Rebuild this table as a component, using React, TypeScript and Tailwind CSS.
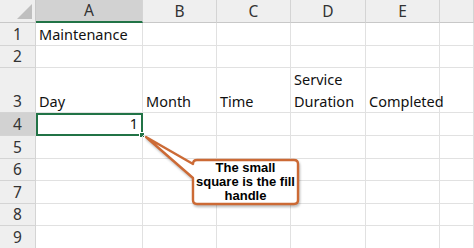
import React from "react";

const COLS = ["A", "B", "C", "D", "E", ""];
const ROW_H = ["23px", "22px", "45px", "23px", "23px", "22px", "23px", "22px", "23px"];

// Row content, keyed by row number then column index
const CELLS: Record<number, Record<number, React.ReactNode>> = {
  1: { 0: "Maintenance" },
  3: {
    0: "Day",
    1: "Month",
    2: "Time",
    3: (
      <>
        Service
        <br />
        Duration
      </>
    ),
    4: "Completed",
  },
  4: { 0: "1" },
};

function HeaderCell({ label, active }: { label: string; active?: boolean }) {
  return (
    <div
      className={`flex items-center justify-center pt-[1px] border-r border-[#d4d4d4] text-[15.5px] text-[#333] ${
        active ? "bg-[#d2d2d2] border-b-2 border-b-[#217346]" : "bg-[#efefef] border-b border-b-[#c8c8c8]"
      }`}
    >
      {label}
    </div>
  );
}

function Callout() {
  return (
    <div className="absolute left-0 top-0 w-[474px] h-[248px] pointer-events-none">
      <svg width="474" height="248" className="absolute left-0 top-0 drop-shadow-[1px_2px_1px_rgba(0,0,0,0.25)]">
        <path
          d="M197 160 H294 Q298 160 298 164 V200 Q298 204 294 204 H197 Q193 204 193 200 V178 L146 137 L193 164 Q193 160 197 160 Z"
          fill="#ffffff"
          stroke="#cc6a35"
          strokeWidth="2.4"
          strokeLinejoin="round"
        />
      </svg>
      <div
        className="absolute left-[193px] top-[161px] w-[105px] text-center text-[13px] leading-[14px] font-bold text-black"
        style={{ fontFamily: '"Liberation Sans", Arial, sans-serif' }}
      >
        The small
        <br />
        square is the fill
        <br />
        handle
      </div>
    </div>
  );
}

export default function App() {
  return (
    <div
      className="relative w-[474px] h-[248px] overflow-hidden bg-white"
      style={{ fontFamily: '"Noto Sans", "Open Sans", sans-serif' }}
    >
      <div className="grid grid-cols-[36px_107px_74px_74px_75px_74px_34px] grid-rows-[23px_23px_22px_45px_23px_23px_22px_23px_22px_23px]">
        {/* select-all corner */}
        <div className="relative bg-[#efefef] border-r border-b border-[#c8c8c8]">
          <div className="absolute right-[3px] bottom-[3px] w-0 h-0 border-l-[15px] border-l-transparent border-b-[15px] border-b-[#bfbfbf]" />
        </div>
        {COLS.map((c, i) => (
          <HeaderCell key={i} label={c} active={i === 0} />
        ))}

        {ROW_H.map((_, r) => {
          const row = r + 1;
          const data = CELLS[row] ?? {};
          return (
            <React.Fragment key={row}>
              <div
                className={`flex items-end justify-center pb-[1px] border-r border-b border-[#d4d4d4] text-[15.5px] leading-[20px] text-[#333] ${
                  row === 4 ? "bg-[#d2d2d2]" : "bg-[#efefef]"
                }`}
              >
                {row}
              </div>
              {COLS.map((_, c) => {
                const selected = row === 4 && c === 0;
                return (
                  <div
                    key={c}
                    className={`relative flex items-end px-[3px] text-[14.5px] leading-[22px] text-[#111] ${
                      selected
                        ? "justify-end border-2 border-[#217346]"
                        : "border-r border-b border-[#e1e1e1]"
                    }`}
                  >
                    <span className="whitespace-nowrap">{data[c]}</span>
                    {selected && (
                      <div className="absolute right-[-4px] bottom-[-4px] w-[6px] h-[6px] bg-[#217346] border border-white" />
                    )}
                  </div>
                );
              })}
            </React.Fragment>
          );
        })}
      </div>
      <Callout />
    </div>
  );
}
